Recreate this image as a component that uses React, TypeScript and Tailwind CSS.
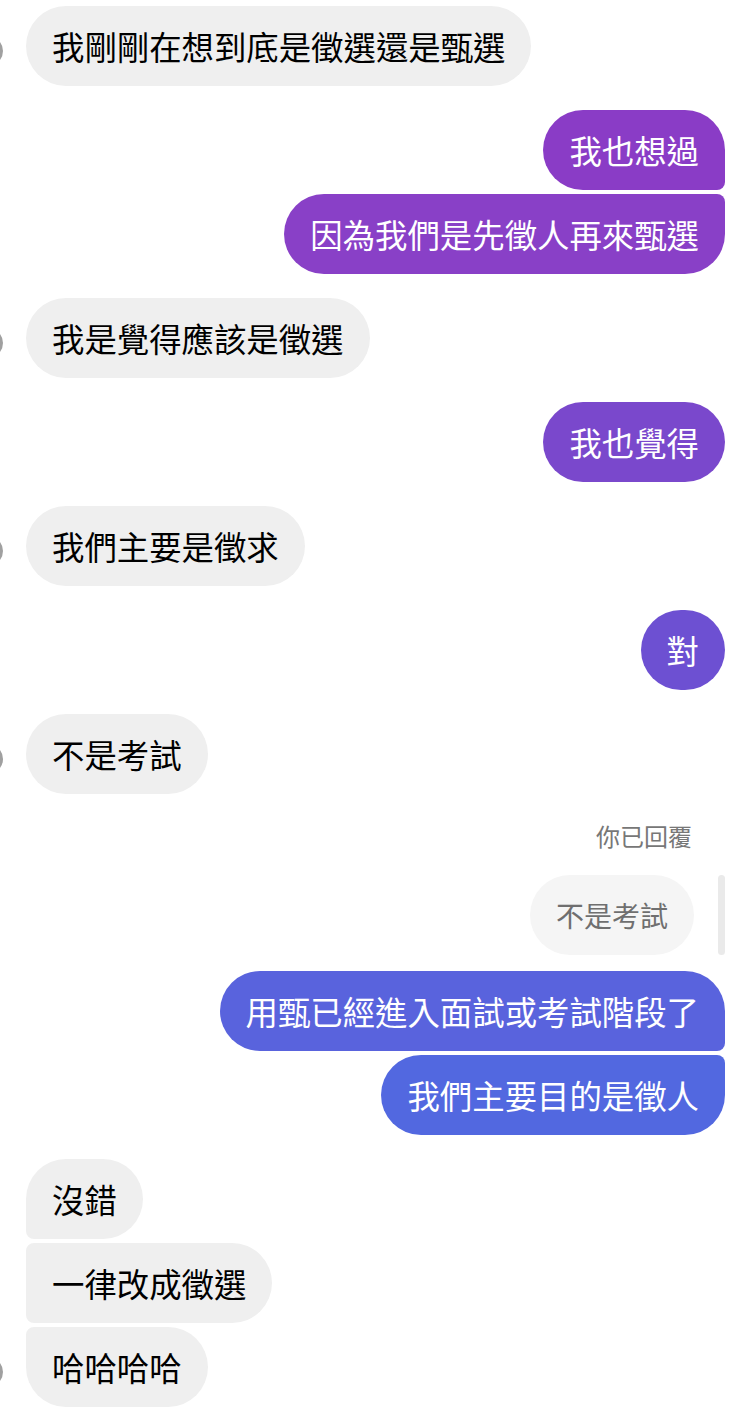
import React from 'react';

type Side = 'left' | 'right';

interface Msg {
  text: string;
  // position inside a run of bubbles from the same sender
  pos: 'single' | 'first' | 'middle' | 'last';
  color?: string;
}

const font = { fontFamily: '"Noto Sans CJK TC", "Noto Sans", sans-serif' };

const Avatar: React.FC = () => (
  <div className="w-[30px] h-[30px] rounded-full bg-[#a0a0a0] shrink-0 -ml-[27px] mr-[23px] mb-[20px]" />
);

const leftRadius: Record<Msg['pos'], string> = {
  single: 'rounded-[40px]',
  first: 'rounded-[40px] rounded-bl-[8px]',
  middle: 'rounded-[40px] rounded-tl-[8px] rounded-bl-[8px]',
  last: 'rounded-[40px] rounded-tl-[8px]',
};

const rightRadius: Record<Msg['pos'], string> = {
  single: 'rounded-[40px]',
  first: 'rounded-[40px] rounded-br-[8px]',
  middle: 'rounded-[40px] rounded-tr-[8px] rounded-br-[8px]',
  last: 'rounded-[40px] rounded-tr-[8px]',
};

const Bubble: React.FC<{ side: Side; msg: Msg }> = ({ side, msg }) => (
  <div
    className={`h-[80px] px-[26px] flex items-center text-[32.4px] leading-none whitespace-nowrap ${
      side === 'left' ? `bg-[#efefef] text-black ${leftRadius[msg.pos]}` : `text-white ${rightRadius[msg.pos]} ${msg.color}`
    }`}
  >
    {msg.text}
  </div>
);

const LeftGroup: React.FC<{ msgs: Msg[] }> = ({ msgs }) => (
  <div className="flex items-end">
    <Avatar />
    <div className="flex flex-col items-start gap-[4px]">
      {msgs.map((m, i) => (
        <Bubble key={i} side="left" msg={m} />
      ))}
    </div>
  </div>
);

const RightGroup: React.FC<{ msgs: Msg[] }> = ({ msgs }) => (
  <div className="flex flex-col items-end gap-[4px] pr-[17px]">
    {msgs.map((m, i) => (
      <Bubble key={i} side="right" msg={m} />
    ))}
  </div>
);

export default function App() {
  return (
    <div className="w-[742px] h-[1411px] bg-white overflow-hidden pt-[6px] flex flex-col gap-[24px]" style={font}>
      <LeftGroup msgs={[{ text: '我剛剛在想到底是徵選還是甄選', pos: 'single' }]} />

      <RightGroup
        msgs={[
          { text: '我也想過', pos: 'first', color: 'bg-[#8a3cc6]' },
          { text: '因為我們是先徵人再來甄選', pos: 'last', color: 'bg-[#8940c7]' },
        ]}
      />

      <LeftGroup msgs={[{ text: '我是覺得應該是徵選', pos: 'single' }]} />

      <RightGroup msgs={[{ text: '我也覺得', pos: 'single', color: 'bg-[#7a48cc]' }]} />

      <LeftGroup msgs={[{ text: '我們主要是徵求', pos: 'single' }]} />

      <RightGroup msgs={[{ text: '對', pos: 'single', color: 'bg-[#6d50d2]' }]} />

      <LeftGroup msgs={[{ text: '不是考試', pos: 'single' }]} />

      {/* Reply block */}
      <div className="flex flex-col items-end pr-[17px] -mt-[4px]">
        <div className="text-[24px] text-[#777777] pr-[33px] leading-none mt-[10px] mb-[27px]">你已回覆</div>
        <div className="flex items-stretch gap-[24px]">
          <div className="h-[80px] px-[26px] flex items-center rounded-[40px] bg-[#f5f5f5] text-[#6f6f6f] text-[28px] leading-none">
            不是考試
          </div>
          <div className="w-[7px] rounded-full bg-[#eaeaea]" />
        </div>
        <div className="flex flex-col items-end gap-[4px] mt-[16px]">
          <Bubble side="right" msg={{ text: '用甄已經進入面試或考試階段了', pos: 'first', color: 'bg-[#5963dd]' }} />
          <Bubble side="right" msg={{ text: '我們主要目的是徵人', pos: 'last', color: 'bg-[#5268e0]' }} />
        </div>
      </div>

      <LeftGroup
        msgs={[
          { text: '沒錯', pos: 'first' },
          { text: '一律改成徵選', pos: 'middle' },
          { text: '哈哈哈哈', pos: 'last' },
        ]}
      />
    </div>
  );
}
